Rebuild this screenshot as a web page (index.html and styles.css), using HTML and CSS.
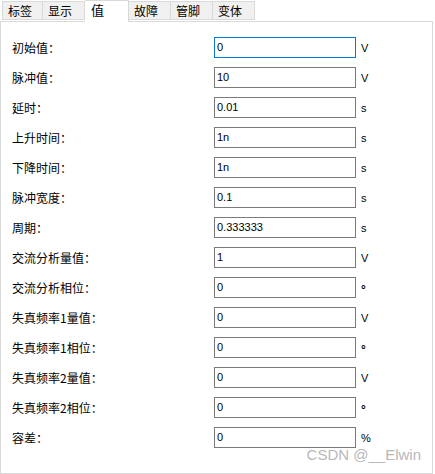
FILE: index.html
```html
<!DOCTYPE html>
<html lang="zh">
<head>
<meta charset="utf-8">
<link rel="stylesheet" href="styles.css">
</head>
<body>
<div class="tabs">
  <div class="tab">标签</div>
  <div class="tab">显示</div>
  <div class="tab active">值</div>
  <div class="tab">故障</div>
  <div class="tab">管脚</div>
  <div class="tab">变体</div>
</div>
<div class="panel">
  <div class="row"><span class="label">初始值：</span><div class="field focus">0</div><span class="unit">V</span></div>
  <div class="row"><span class="label">脉冲值：</span><div class="field">10</div><span class="unit">V</span></div>
  <div class="row"><span class="label">延时：</span><div class="field">0.01</div><span class="unit">s</span></div>
  <div class="row"><span class="label">上升时间：</span><div class="field">1n</div><span class="unit">s</span></div>
  <div class="row"><span class="label">下降时间：</span><div class="field">1n</div><span class="unit">s</span></div>
  <div class="row"><span class="label">脉冲宽度：</span><div class="field">0.1</div><span class="unit">s</span></div>
  <div class="row"><span class="label">周期：</span><div class="field">0.333333</div><span class="unit">s</span></div>
  <div class="row"><span class="label">交流分析量值：</span><div class="field">1</div><span class="unit">V</span></div>
  <div class="row"><span class="label">交流分析相位：</span><div class="field">0</div><span class="unit deg">°</span></div>
  <div class="row"><span class="label">失真频率1量值：</span><div class="field">0</div><span class="unit">V</span></div>
  <div class="row"><span class="label">失真频率1相位：</span><div class="field">0</div><span class="unit deg">°</span></div>
  <div class="row"><span class="label">失真频率2量值：</span><div class="field">0</div><span class="unit">V</span></div>
  <div class="row"><span class="label">失真频率2相位：</span><div class="field">0</div><span class="unit deg">°</span></div>
  <div class="row"><span class="label">容差：</span><div class="field">0</div><span class="unit">%</span></div>
  <div class="watermark">CSDN @__Elwin</div>
</div>
</body>
</html>
```
FILE: styles.css
```css
html, body {
  margin: 0;
  padding: 0;
  background: #ffffff;
}
body {
  width: 435px;
  height: 474px;
  font-family: "Noto Sans CJK SC", "Liberation Sans", sans-serif;
  font-size: 12px;
  color: #000;
  overflow: hidden;
}
.tabs {
  display: flex;
  align-items: flex-end;
  height: 21px;
  padding-left: 2px;
  position: relative;
  z-index: 1;
}
.tab {
  box-sizing: border-box;
  width: 42px;
  height: 19px;
  margin-bottom: 1px;
  border: 1px solid #d9d9d9;
  border-left: none;
  background: #f0f0f0;
  line-height: 17px;
  padding-left: 5px;
}
.tab:first-child {
  border-left: 1px solid #d9d9d9;
  width: 41px;
}
.tab.active {
  width: 44px;
  height: 22px;
  margin-bottom: -1px;
  background: #ffffff;
  border-bottom: none;
  font-size: 13px;
  line-height: 17px;
  padding-left: 6px;
}
.panel {
  box-sizing: border-box;
  position: relative;
  width: 433px;
  height: 453px;
  border: 1px solid #d9d9d9;
  padding: 15px 0 0 11px;
}
.row {
  display: flex;
  align-items: center;
  height: 21px;
  margin-bottom: 9px;
}
.label {
  width: 202px;
}
.field {
  box-sizing: border-box;
  width: 142px;
  height: 21px;
  border: 1px solid #7a7a7a;
  font-family: "Liberation Sans", sans-serif;
  font-size: 11px;
  line-height: 19px;
  padding-left: 2px;
}
.field.focus {
  border-color: #0078d7;
}
.unit {
  margin-left: 5px;
  font-family: "Liberation Sans", sans-serif;
  font-size: 11px;
}
.unit.deg {
  font-size: 12px;
  font-weight: bold;
  padding-top: 5px;
}
.watermark {
  position: absolute;
  right: 11px;
  top: 424px;
  font-family: "Liberation Sans", sans-serif;
  font-size: 15px;
  color: #b8b8b8;
}
```
